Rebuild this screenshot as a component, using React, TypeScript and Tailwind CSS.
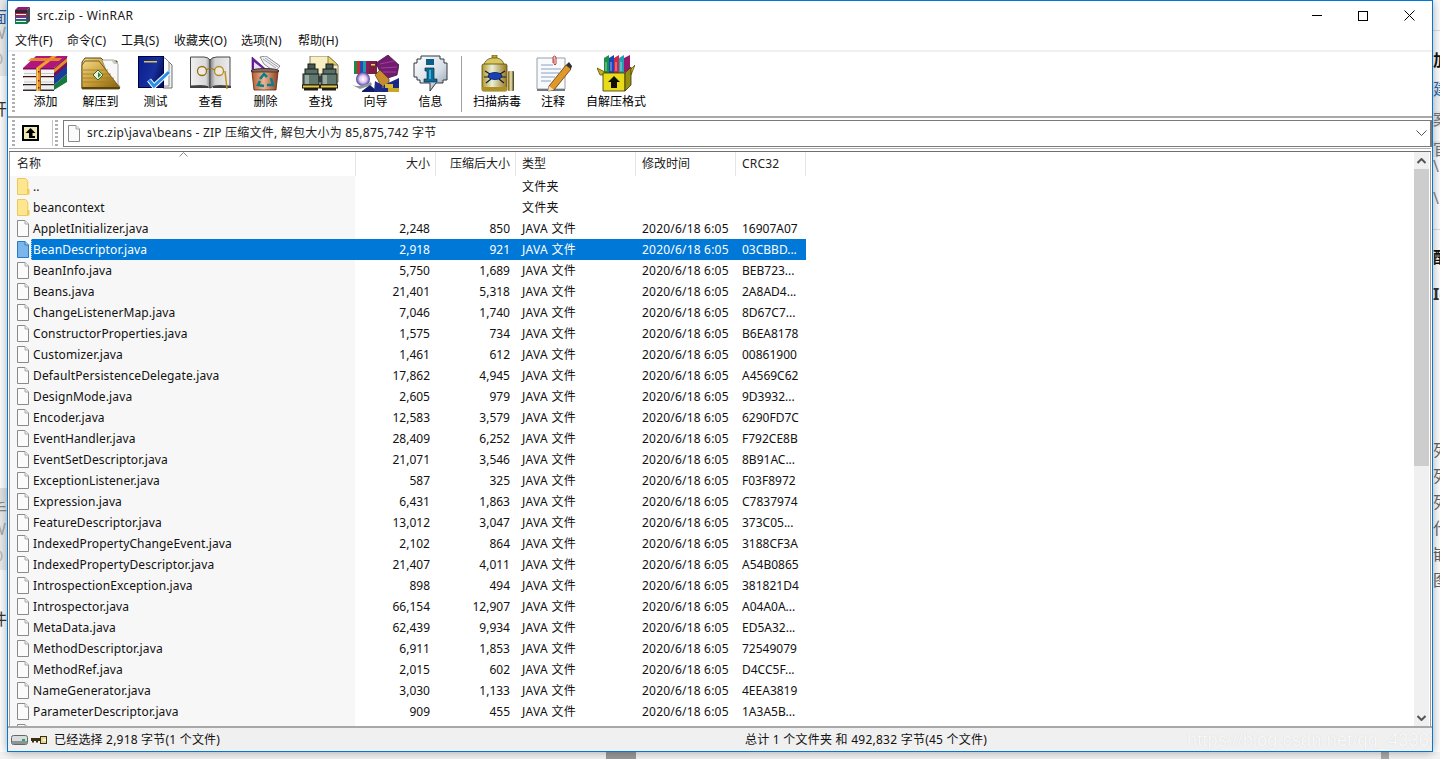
import React from "react";

const rows: [string, string, string, string, string, string][] = [
  ["..", "", "", "文件夹", "", ""],
  ["beancontext", "", "", "文件夹", "", ""],
  ["AppletInitializer.java", "2,248", "850", "JAVA 文件", "2020/6/18 6:05", "16907A07"],
  ["BeanDescriptor.java", "2,918", "921", "JAVA 文件", "2020/6/18 6:05", "03CBBD..."],
  ["BeanInfo.java", "5,750", "1,689", "JAVA 文件", "2020/6/18 6:05", "BEB723..."],
  ["Beans.java", "21,401", "5,318", "JAVA 文件", "2020/6/18 6:05", "2A8AD4..."],
  ["ChangeListenerMap.java", "7,046", "1,740", "JAVA 文件", "2020/6/18 6:05", "8D67C7..."],
  ["ConstructorProperties.java", "1,575", "734", "JAVA 文件", "2020/6/18 6:05", "B6EA8178"],
  ["Customizer.java", "1,461", "612", "JAVA 文件", "2020/6/18 6:05", "00861900"],
  ["DefaultPersistenceDelegate.java", "17,862", "4,945", "JAVA 文件", "2020/6/18 6:05", "A4569C62"],
  ["DesignMode.java", "2,605", "979", "JAVA 文件", "2020/6/18 6:05", "9D3932..."],
  ["Encoder.java", "12,583", "3,579", "JAVA 文件", "2020/6/18 6:05", "6290FD7C"],
  ["EventHandler.java", "28,409", "6,252", "JAVA 文件", "2020/6/18 6:05", "F792CE8B"],
  ["EventSetDescriptor.java", "21,071", "3,546", "JAVA 文件", "2020/6/18 6:05", "8B91AC..."],
  ["ExceptionListener.java", "587", "325", "JAVA 文件", "2020/6/18 6:05", "F03F8972"],
  ["Expression.java", "6,431", "1,863", "JAVA 文件", "2020/6/18 6:05", "C7837974"],
  ["FeatureDescriptor.java", "13,012", "3,047", "JAVA 文件", "2020/6/18 6:05", "373C05..."],
  ["IndexedPropertyChangeEvent.java", "2,102", "864", "JAVA 文件", "2020/6/18 6:05", "3188CF3A"],
  ["IndexedPropertyDescriptor.java", "21,407", "4,011", "JAVA 文件", "2020/6/18 6:05", "A54B0865"],
  ["IntrospectionException.java", "898", "494", "JAVA 文件", "2020/6/18 6:05", "381821D4"],
  ["Introspector.java", "66,154", "12,907", "JAVA 文件", "2020/6/18 6:05", "A04A0A..."],
  ["MetaData.java", "62,439", "9,934", "JAVA 文件", "2020/6/18 6:05", "ED5A32..."],
  ["MethodDescriptor.java", "6,911", "1,853", "JAVA 文件", "2020/6/18 6:05", "72549079"],
  ["MethodRef.java", "2,015", "602", "JAVA 文件", "2020/6/18 6:05", "D4CC5F..."],
  ["NameGenerator.java", "3,030", "1,133", "JAVA 文件", "2020/6/18 6:05", "4EEA3819"],
  ["ParameterDescriptor.java", "909", "455", "JAVA 文件", "2020/6/18 6:05", "1A3A5B..."],
  ["PersistenceDelegate.java", "", "", "", "", ""],
];

const IconAdd = () => (
  <svg width="46" height="36" viewBox="0 0 46 36">
    <polygon points="31,21 44,9 44,19 31,30" fill="#1c3c9c" />
    <polygon points="31,30 44,19 44,27 31,35" fill="#157a3c" />
    <polygon points="31,13 44,1 44,10 31,22" fill="#7c0c58" />
    <polygon points="0,13 13,1 45,1 31,13" fill="#b0167c" />
    <rect x="1" y="13" width="30" height="8" fill="#f4f4f4" />
    <rect x="0" y="13" width="31" height="1.5" fill="#80105c" />
    <rect x="1" y="18" width="30" height="1" fill="#c8c8c8" />
    <rect x="0" y="21" width="31" height="1.5" fill="#43120f" />
    <rect x="1" y="22.5" width="30" height="7" fill="#f4f4f4" />
    <rect x="1" y="26.5" width="30" height="1" fill="#c8c8c8" />
    <rect x="0" y="29" width="31" height="1.5" fill="#302020" />
    <rect x="1" y="30.5" width="30" height="4" fill="#eeeeee" />
    <rect x="0" y="34.5" width="31" height="1.5" fill="#303030" />
    <polygon points="13,13 18,13 34,1 29,1" fill="#f0a030" />
    <polygon points="5,6 36,6 39,3 8,3" fill="#e89028" opacity="0.9" />
    <polygon points="31,14 44,3 44,7 31,18" fill="#e09028" />
    <rect x="13" y="13" width="5" height="23" fill="#e8962c" />
    <rect x="14" y="13" width="1" height="23" fill="#f8c870" />
    <rect x="17" y="13" width="1" height="23" fill="#a05c10" />
    <rect x="15" y="16" width="1.5" height="1.5" fill="#603008" />
    <rect x="15" y="25" width="1.5" height="1.5" fill="#603008" />
    <rect x="15" y="32" width="1.5" height="1.5" fill="#603008" />
  </svg>
);

const IconExtract = () => (
  <svg width="40" height="34" viewBox="0 0 40 34">
    <defs>
      <linearGradient id="gold" x1="0" y1="0" x2="1" y2="1">
        <stop offset="0" stopColor="#f0d888" />
        <stop offset="0.5" stopColor="#c89c38" />
        <stop offset="1" stopColor="#806010" />
      </linearGradient>
    </defs>
    <path d="M1 6 L4 2 L20 2 L23 5 L36 5 L36 32 L1 32 Z" fill="url(#gold)" stroke="#5c4410" />
    <polygon points="21,4 33,4 37,8 37,28 39,31 38,32 29,24" fill="#f8f8f8" stroke="#808080" strokeWidth="0.7" />
    <polygon points="30,4 33,8 37,8 33,4" fill="#c8c8c8" />
    <polygon points="18,5 39,32 38,33 1,33 1,9 4,5" fill="url(#gold)" stroke="#5c4410" strokeWidth="0.8" />
    <path d="M2 14 H27 M2 18 H30 M2 22 H33 M2 26 H35" stroke="#a07c20" strokeWidth="0.8" />
    <polygon points="17,14 22,19 17,24 12,19" fill="#e8f0e0" stroke="#386830" />
    <polygon points="17,16 20,19 17,22" fill="#2c8838" />
    <polygon points="1,33 38,33 39,31 1,31" fill="#5c4408" />
  </svg>
);

const IconTest = () => (
  <svg width="35" height="34" viewBox="0 0 35 34">
    <defs>
      <linearGradient id="bk" x1="0" y1="0" x2="1" y2="0.4">
        <stop offset="0" stopColor="#0a1e90" />
        <stop offset="0.7" stopColor="#18309c" />
        <stop offset="1" stopColor="#081468" />
      </linearGradient>
    </defs>
    <polygon points="25,5 30,5 34,9 34,32 25,32" fill="#f0f0f0" stroke="#707070" />
    <polygon points="25,2 27,2 31,6 31,30 25,30" fill="#fcfcfc" stroke="#909090" />
    <rect x="0.5" y="0.5" width="25" height="31" fill="url(#bk)" stroke="#000048" />
    <rect x="6" y="5" width="13" height="1.5" fill="#e0c840" />
    <path d="M11 24 L16 30 L31 16" fill="none" stroke="#fff" strokeWidth="5" />
    <path d="M11 24 L16 30 L31 16" fill="none" stroke="#2890e8" strokeWidth="3" />
  </svg>
);

const IconView = () => (
  <svg width="41" height="34" viewBox="0 0 41 34">
    <defs>
      <linearGradient id="pgL" x1="0" y1="0" x2="1" y2="0">
        <stop offset="0" stopColor="#f0f0f0" />
        <stop offset="0.8" stopColor="#d8d8d8" />
        <stop offset="1" stopColor="#888888" />
      </linearGradient>
      <linearGradient id="pgR" x1="0" y1="0" x2="1" y2="0">
        <stop offset="0" stopColor="#808080" />
        <stop offset="0.25" stopColor="#d4d4d4" />
        <stop offset="1" stopColor="#ececec" />
      </linearGradient>
    </defs>
    <path d="M0.5 30 V1 H14 Q18 1 20 4 V32 Q16 29 10 29.5 Z" fill="url(#pgL)" stroke="#484848" />
    <path d="M40 30 V1 H27 Q22 1 20 4 V32 Q24 29 30 29.5 Z" fill="url(#pgR)" stroke="#484848" />
    <rect x="0" y="30" width="18" height="2" fill="#404040" />
    <rect x="23" y="30" width="18" height="2" fill="#404040" />
    <circle cx="12" cy="15" r="4.5" fill="#f4f0e0" fillOpacity="0.7" stroke="#98701c" strokeWidth="1.3" />
    <circle cx="29" cy="15" r="4.5" fill="#f4f0e0" fillOpacity="0.7" stroke="#b88c24" strokeWidth="1.3" />
    <path d="M16 14 Q20 11 25 14" fill="none" stroke="#98701c" strokeWidth="1.2" />
    <path d="M35 15 L37 33" stroke="#c09020" strokeWidth="1.5" />
  </svg>
);

const IconDelete = () => (
  <svg width="31" height="35" viewBox="0 0 31 35">
    <defs>
      <linearGradient id="bin" x1="0" y1="0" x2="1" y2="0">
        <stop offset="0" stopColor="#b85c30" />
        <stop offset="0.45" stopColor="#e8b898" />
        <stop offset="1" stopColor="#904020" />
      </linearGradient>
    </defs>
    <polygon points="2,1 2,15 18,15" fill="#6c1c9c" stroke="#30105c" strokeWidth="0.6" />
    <polygon points="4,6 4,13 13,13" fill="#e8e0f0" />
    <polygon points="10,1 16,0 30,10 25,16 14,8" fill="#f0f0f4" stroke="#70707c" strokeWidth="0.8" />
    <path d="M13 3 L26 12 M15 2 L28 11" stroke="#9090a0" strokeWidth="0.8" />
    <ellipse cx="15" cy="15" rx="14" ry="2.5" fill="#886860" stroke="#403028" />
    <polygon points="2,16 28,16 26,34 4,34" fill="url(#bin)" stroke="#502810" strokeWidth="0.8" />
    <path d="M10 23 L14 18 L17 21 M21 22 L23 29 L17 29 M14 30 L8 29 L10 25" fill="none" stroke="#107c88" strokeWidth="2.6" />
  </svg>
);

const IconFind = () => (
  <svg width="37" height="35" viewBox="0 0 37 35">
    <polygon points="8,0 26,0 36,9 36,26 8,26" fill="#f8f0c4" stroke="#88805c" />
    <polygon points="26,0 26,9 36,9" fill="#ecd660" stroke="#88805c" />
    <g>
      <rect x="6" y="8" width="7" height="6" fill="#485850" stroke="#181c18" />
      <rect x="3" y="13" width="13" height="6" fill="#587068" stroke="#181c18" />
      <rect x="1" y="18" width="16" height="11" fill="#607870" stroke="#181c18" />
      <rect x="3" y="19" width="4" height="9" fill="#98aca4" />
      <rect x="0.5" y="29" width="17" height="3" fill="#e0c848" stroke="#281c08" />
      <rect x="2" y="32" width="14" height="2.5" fill="#201c10" />
      <rect x="24" y="8" width="7" height="6" fill="#485850" stroke="#181c18" />
      <rect x="21" y="13" width="13" height="6" fill="#587068" stroke="#181c18" />
      <rect x="19" y="18" width="16" height="11" fill="#607870" stroke="#181c18" />
      <rect x="21" y="19" width="4" height="9" fill="#98aca4" />
      <rect x="18.5" y="29" width="17" height="3" fill="#e0c848" stroke="#281c08" />
      <rect x="20" y="32" width="14" height="2.5" fill="#201c10" />
      <rect x="16" y="20" width="4" height="6" fill="#383c38" />
    </g>
  </svg>
);

const IconWizard = () => (
  <svg width="47" height="37" viewBox="0 0 47 37">
    <defs>
      <radialGradient id="orb" cx="0.5" cy="0.5" r="0.5">
        <stop offset="0" stopColor="#ffffff" />
        <stop offset="0.5" stopColor="#e8c8f0" />
        <stop offset="1" stopColor="#4040a0" />
      </radialGradient>
    </defs>
    <rect x="2" y="6" width="3" height="13" fill="#109048" />
    <rect x="5" y="6" width="3" height="13" fill="#d02830" />
    <rect x="8" y="6" width="3" height="13" fill="#2848c0" />
    <rect x="11" y="6" width="3" height="13" fill="#18a0a0" />
    <rect x="14" y="6" width="3" height="13" fill="#901860" />
    <rect x="17" y="6" width="8" height="13" fill="#782040" />
    <rect x="19" y="9" width="4" height="1.5" fill="#e8d070" />
    <circle cx="11" cy="24" r="7" fill="url(#orb)" />
    <path d="M0 30 Q8 33 19 27 L20 30 L8 34 Z" fill="#9098a0" />
    <polygon points="10,36 18,30 26,37 10,37" fill="#101c68" />
    <path d="M24 8 L36 0 L47 10 L45 20 L36 23 L28 17 Z" fill="#701c70" stroke="#301030" strokeWidth="0.7" />
    <path d="M28 9 L42 6 M29 13 L45 12 M31 17 L44 17" stroke="#a83c98" strokeWidth="1" />
    <path d="M23 20 L28 15 L37 24 L37 31 L29 32 L26 25 Z" fill="#c88c30" stroke="#583808" strokeWidth="0.7" />
    <polygon points="23,26 30,30 32,37 22,37 " fill="#1c2c88" />
    <polygon points="32,30 47,23 47,37 30,37" fill="#182884" />
    <rect x="33" y="29" width="8" height="4" fill="#d8b830" />
    <rect x="36" y="33" width="11" height="4" fill="#c8a828" />
  </svg>
);

const IconInfo = () => (
  <svg width="35" height="37" viewBox="0 0 35 37">
    <defs>
      <linearGradient id="bub" x1="0" y1="0" x2="1" y2="1">
        <stop offset="0" stopColor="#ffffff" />
        <stop offset="0.6" stopColor="#d4dce4" />
        <stop offset="1" stopColor="#8898a8" />
      </linearGradient>
    </defs>
    <path d="M8 1 H27 V4 H31 V8 H34 V25 H30 V28 H23 L17 36 V28 H7 V25 H4 V22 H1 V8 H4 V4 H8 Z" fill="url(#bub)" stroke="#303840" />
    <rect x="13" y="4" width="8" height="6" fill="#0c5c88" />
    <path d="M12 13 H21 V24 H24 V27 H11 V24 H14 V16 H12 Z" fill="#0c6c98" stroke="#082c48" strokeWidth="0.7" />
    <rect x="16" y="15" width="2" height="9" fill="#38b0d8" />
  </svg>
);

const IconScan = () => (
  <svg width="33" height="37" viewBox="0 0 33 37">
    <defs>
      <linearGradient id="can" x1="0" y1="0" x2="1" y2="0">
        <stop offset="0" stopColor="#b09828" />
        <stop offset="0.4" stopColor="#e8f0d8" />
        <stop offset="1" stopColor="#987818" />
      </linearGradient>
      <linearGradient id="lid" x1="0" y1="0" x2="1" y2="0">
        <stop offset="0" stopColor="#806010" />
        <stop offset="0.5" stopColor="#f0e8b0" />
        <stop offset="1" stopColor="#303010" />
      </linearGradient>
    </defs>
    <rect x="11" y="0" width="5" height="4" fill="#c0a030" stroke="#584810" strokeWidth="0.6" />
    <path d="M3 10 Q4 4 11 3 H16 Q22 4 23 10 Z" fill="#d8c860" stroke="#584810" strokeWidth="0.7" />
    <rect x="1" y="9" width="25" height="27" rx="1.5" fill="url(#can)" stroke="#584810" strokeWidth="0.8" />
    <rect x="1" y="32" width="25" height="4" fill="#b09020" />
    <ellipse cx="14" cy="21" rx="7" ry="3.5" fill="#1840b8" stroke="#081858" strokeWidth="0.8" />
    <path d="M4 16 L9 19 M3 22 H8 M5 28 L10 24 M24 16 L19 19 M25 22 H20 M23 28 L18 24" stroke="#101840" strokeWidth="1.2" />
    <rect x="27" y="16" width="6" height="20" rx="1" fill="url(#lid)" />
  </svg>
);

const IconComment = () => (
  <svg width="37" height="37" viewBox="0 0 37 37">
    <polygon points="2,3 30,3 30,34 2,34" fill="#f8fafc" stroke="#98a0a8" />
    <rect x="2" y="34" width="28" height="2" fill="#707880" />
    <path d="M6 10 H18 M6 14 H26 M6 18 H24 M6 22 H20 M6 26 H16" stroke="#88a0c8" strokeWidth="1" />
    <path d="M18 8 V2 Q20 0 21 2 V9 Q20 11 19 9 V4" fill="none" stroke="#c83830" strokeWidth="1" />
    <polygon points="14,31 31,10 36,14 19,35 13,36" fill="#e09828" stroke="#402808" strokeWidth="0.7" />
    <polygon points="31,10 34,7 37,11 36,14" fill="#303030" />
    <polygon points="13,36 14,31 19,35" fill="#f0e0c0" />
  </svg>
);

const IconSfx = () => (
  <svg width="38" height="37" viewBox="0 0 38 37">
    <polygon points="7,3 12,0 12,18 7,18" fill="#189048" />
    <polygon points="12,3 17,0 17,18 12,18" fill="#1848b8" />
    <polygon points="17,3 22,0 22,18 17,18" fill="#d02848" />
    <polygon points="22,3 27,0 27,18 22,18" fill="#20a0b0" />
    <polygon points="27,3 33,0 33,14 27,18" fill="#981870" />
    <path d="M9 7 V16 M14 7 V16 M19 7 V16 M24 7 V16" stroke="#fff" strokeWidth="0.8" opacity="0.75" />
    <polygon points="0,13 8,17 8,20 3,20" fill="#c8b010" stroke="#484008" strokeWidth="0.7" />
    <polygon points="38,10 30,18 30,20 34,20" fill="#d8c018" stroke="#484008" strokeWidth="0.7" />
    <polygon points="6,18 28,18 28,36 6,36" fill="#e8dc18" stroke="#383008" strokeWidth="0.8" />
    <polygon points="28,18 34,12 34,30 28,36" fill="#989010" stroke="#383008" strokeWidth="0.8" />
    <polygon points="17,21 23,27 20,27 20,33 14,33 14,27 11,27" fill="#101008" />
  </svg>
);

const ToolButton = ({ w, label, children }: { w: string; label: string; children: React.ReactNode }) => (
  <div className={`flex flex-col items-center ${w}`}>
    <div className="flex h-[38px] items-center justify-center">{children}</div>
    <div className="mt-[2px] text-[12px] leading-[16px] whitespace-nowrap">{label}</div>
  </div>
);

const FileIcon = ({ selected }: { selected?: boolean }) => (
  <svg width="14" height="17" viewBox="0 0 14 17" className="shrink-0">
    <path
      d="M1.5 0.5 H9 L12.5 4 V16.5 H1.5 Z"
      fill={selected ? "#7ab6ec" : "#fbfbfb"}
      stroke={selected ? "#2a78c0" : "#8a8a8a"}
    />
    <path d="M9 0.5 V4 H12.5" fill={selected ? "#a8d0f4" : "#ececec"} stroke={selected ? "#2a78c0" : "#a8a8a8"} />
  </svg>
);

const FolderIcon = () => (
  <svg width="14" height="17" viewBox="0 0 14 17" className="shrink-0">
    <path d="M1.5 0.5 H9.5 L11.5 2.5 V16.5 H1.5 Z" fill="#fde68f" stroke="#edc95a" />
    <rect x="11.5" y="11" width="2" height="5.5" fill="#f5c94f" />
    <rect x="11.5" y="3" width="1" height="8" fill="#f9dc80" />
  </svg>
);

const Cell = ({ w, right, extra, children }: { w: string; right?: boolean; extra?: string; children: React.ReactNode }) => (
  <div className={`${w} shrink-0 overflow-hidden whitespace-nowrap ${right ? "pr-[5px] text-right" : "pl-[7px]"} ${extra ?? ""}`}>{children}</div>
);

const Strip = ({ items, align }: { items: [number, string, string][]; align: string }) => (
  <div className={`w-[7px] shrink-0 overflow-hidden flex flex-col bg-white ${align}`}>
    {items.map(([h, t, c], i) => (
      <div key={i} style={{ height: h }} className={`w-[7px] flex items-center overflow-hidden ${c}`}>
        {t ? <span className="shrink-0 w-[16px] text-[16px] leading-[16px]">{t}</span> : null}
      </div>
    ))}
  </div>
);

const Grip = ({ h }: { h: string }) => (
  <div className={`w-[3px] ${h} bg-[repeating-linear-gradient(to_bottom,#b0b0b0_0,#b0b0b0_2px,transparent_2px,transparent_4px)]`} />
);

export default function App() {
  return (
    <div className="w-[1440px] h-[759px] overflow-hidden flex flex-col bg-white text-black font-['Noto_Sans','Noto_Sans_CJK_SC',sans-serif] text-[12px]">
      <div className="flex h-[752px]">
        <Strip
          align="items-end"
          items={[
            [10, "", "bg-[#ececec]"],
            [14, "面", "justify-end text-[#2a5a9a] bg-[#ececec]"],
            [18, "W", "justify-end text-[#aaa] bg-[#ececec]"],
            [34, "O", "justify-end text-[#bbb] bg-[#ececec]"],
            [24, "", ""],
            [18, "开", "justify-end text-[#333]"],
            [132, "", ""],
            [238, "", ""],
            [14, "", "bg-[#e4e4e4]"],
            [14, "手", "justify-end text-[#888] bg-[#ececec]"],
            [26, "W", "justify-end text-[#aaa] bg-[#ececec]"],
            [28, "O", "justify-end text-[#bbb] bg-[#ececec]"],
            [40, "", ""],
            [18, "件", "justify-end text-[#333]"],
          ]}
        />
        <div className="relative z-10 w-[1426px] shrink-0 flex flex-col border border-[#0078d7] bg-white shadow-[0_0_10px_rgba(0,0,0,0.35)]">
          {/* title bar */}
          <div className="h-[29px] flex items-center pl-[7px]">
            <svg width="16" height="17" viewBox="0 0 16 17" className="mr-[6px]">
              <polygon points="0,3 3,0 15,0 12,3" fill="#8c2070" />
              <rect x="0" y="3" width="12" height="3" fill="#302838" />
              <rect x="0" y="6" width="12" height="4" fill="#b02038" />
              <rect x="0" y="10" width="12" height="3" fill="#2850b8" />
              <rect x="0" y="13" width="12" height="4" fill="#108048" />
              <rect x="1" y="7" width="10" height="1" fill="#f4f4f4" />
              <rect x="1" y="11" width="10" height="1" fill="#f4f4f4" />
              <rect x="1" y="14" width="10" height="1" fill="#f4f4f4" />
              <polygon points="12,3 15,0 15,14 12,17" fill="#404858" />
            </svg>
            <span className="text-[12px] text-[#1a1a1a] tracking-[0.4px]">src.zip - WinRAR</span>
            <div className="ml-auto flex items-center h-full">
              <div className="w-[46px] flex justify-center">
                <div className="w-[10px] h-px bg-black" />
              </div>
              <div className="w-[46px] flex justify-center">
                <div className="w-[10px] h-[10px] border border-black" />
              </div>
              <div className="w-[46px] flex justify-center">
                <svg width="11" height="11" viewBox="0 0 11 11">
                  <path d="M0.5 0.5 L10.5 10.5 M10.5 0.5 L0.5 10.5" stroke="#000" strokeWidth="1" />
                </svg>
              </div>
            </div>
          </div>
          {/* menu */}
          <div className="h-[20px] flex items-center text-[12px] text-[#111] pl-[7px] pt-[2px] tracking-[0.05px]">
            <span className="w-[52px]">文件(F)</span>
            <span className="w-[54px]">命令(C)</span>
            <span className="w-[53px]">工具(S)</span>
            <span className="w-[67px]">收藏夹(O)</span>
            <span className="w-[57px]">选项(N)</span>
            <span>帮助(H)</span>
          </div>
          {/* toolbar */}
          <div className="h-[66px] border-t-2 border-[#f0f0f0] flex items-center pl-[4px]">
            <Grip h="h-[60px]" />
            <div className="flex items-start pt-[2px] ml-[3px] h-full">
              <ToolButton w="w-[55px]" label="添加"><IconAdd /></ToolButton>
              <ToolButton w="w-[55px]" label="解压到"><IconExtract /></ToolButton>
              <ToolButton w="w-[55px]" label="测试"><IconTest /></ToolButton>
              <ToolButton w="w-[55px]" label="查看"><IconView /></ToolButton>
              <ToolButton w="w-[55px]" label="删除"><IconDelete /></ToolButton>
              <ToolButton w="w-[55px]" label="查找"><IconFind /></ToolButton>
              <ToolButton w="w-[55px]" label="向导"><IconWizard /></ToolButton>
              <ToolButton w="w-[55px]" label="信息"><IconInfo /></ToolButton>
            </div>
            <div className="w-px h-[56px] bg-[#a0a0a0] ml-[3px] mr-[3px]" />
            <div className="flex items-start pt-[2px] h-full">
              <ToolButton w="w-[64px]" label="扫描病毒"><IconScan /></ToolButton>
              <ToolButton w="w-[48px]" label="注释"><IconComment /></ToolButton>
              <ToolButton w="w-[78px]" label="自解压格式"><IconSfx /></ToolButton>
            </div>
          </div>
          {/* address */}
          <div className="h-[31px] border-t-2 border-[#a8a8a8] flex items-center pl-[4px]">
            <Grip h="h-[26px]" />
            <div className="ml-[7px] w-[17px] h-[16px] border-2 border-black bg-[#efe9b4] flex items-center justify-center">
              <svg width="11" height="10" viewBox="0 0 11 10">
                <path d="M5.5 0 L10.5 5 H7.5 V8 H10 V10 H4 V5 H0.5 Z" fill="#000" />
              </svg>
            </div>
            <div className="ml-[13px]"><div className="w-px h-[26px] bg-[#c8c8c8]" /></div>
            <div className="ml-[2px]"><Grip h="h-[26px]" /></div>
            <div className="ml-[5px] mt-[1px] flex-1 h-[27px] border border-[#7a7a7a] border-r-2 flex items-center">
              <div className="ml-[3px]"><FileIcon /></div>
              <span className="ml-[6px] text-[12px] text-[#222] tracking-[0.22px]">src.zip\java\beans - ZIP 压缩文件, 解包大小为 85,875,742 字节</span>
              <svg width="11" height="7" viewBox="0 0 11 7" className="ml-auto mr-[3px]">
                <path d="M0.5 0.5 L5.5 5.5 L10.5 0.5" fill="none" stroke="#555" />
              </svg>
            </div>
          </div>
          {/* list */}
          <div className="h-[4px] border-b border-[#707070] mx-[1px] mt-[1px] border-t border-t-[#b0b0b0]" />
          <div className="flex-1 min-h-0 flex ml-[1px] mr-[1px] border-l border-r border-[#a0a0a0]">
            <div className="flex-1 min-w-0 flex flex-col overflow-hidden">
              {/* header */}
              <div className="h-[24px] shrink-0 flex flex-col text-[#222]">
                <div className="h-[24px] flex items-center relative">
                  <div className="w-[346px] pl-[7px] h-full flex items-center border-r border-[#e5e5e5] relative">
                    名称
                    <svg width="9" height="5" viewBox="0 0 9 5" className="absolute left-[169px] top-0">
                      <path d="M0.5 4.5 L4.5 0.5 L8.5 4.5" fill="none" stroke="#888" />
                    </svg>
                  </div>
                  <div className="w-[80px] pr-[5px] h-full flex items-center justify-end border-r border-[#e5e5e5]">大小</div>
                  <div className="w-[80px] pr-[5px] h-full flex items-center justify-end border-r border-[#e5e5e5]">压缩后大小</div>
                  <div className="w-[120px] pl-[6px] h-full flex items-center border-r border-[#e5e5e5]">类型</div>
                  <div className="w-[100px] pl-[6px] h-full flex items-center border-r border-[#e5e5e5]">修改时间</div>
                  <div className="w-[70px] pl-[6px] h-full flex items-center border-r border-[#e5e5e5] tracking-[0.2px]">CRC32</div>
                </div>
              </div>
              {/* rows */}
              <div className="flex-1 min-h-0 overflow-hidden">
                {rows.map((r, i) => {
                  const sel = r[0] === "BeanDescriptor.java";
                  const dir = i < 2;
                  return (
                    <div key={r[0]} className="h-[21px] flex items-center leading-[21px]">
                      <div className="w-[345px] h-full shrink-0 bg-[#f7f7f7] flex items-center pl-[6px]">
                        {dir ? <FolderIcon /> : <FileIcon selected={sel} />}
                        <div className={`ml-[1px] h-[21px] flex-1 tracking-[0.13px] ${sel ? "pl-[1px] bg-[#0078d7] text-white border-l border-dotted border-[#9cc8ee]" : "pl-[2px] text-[#111]"}`}>{r[0]}</div>
                      </div>
                      <div className={`flex h-full items-center ${sel ? "bg-[#0078d7] text-white" : "text-[#111]"}`}>
                        <Cell w="w-[80px]" right>{r[1]}</Cell>
                        <Cell w="w-[80px]" right>{r[2]}</Cell>
                        <Cell w="w-[120px]" extra="tracking-[0.3px]">{r[3]}</Cell>
                        <Cell w="w-[100px]" extra="tracking-[0.2px]">{r[4]}</Cell>
                        <Cell w="w-[71px]">{r[5]}</Cell>
                      </div>
                    </div>
                  );
                })}
              </div>
            </div>
            {/* scrollbar */}
            <div className="w-[15px] shrink-0 bg-[#f0f0f0] flex flex-col">
              <div className="h-[17px] flex items-center justify-center">
                <svg width="9" height="6" viewBox="0 0 9 6">
                  <path d="M0.5 5 L4.5 1 L8.5 5" fill="none" stroke="#555" strokeWidth="2" />
                </svg>
              </div>
              <div className="h-[297px] bg-[#cdcdcd]" />
              <div className="flex-1" />
              <div className="h-[17px] flex items-center justify-center">
                <svg width="9" height="6" viewBox="0 0 9 6">
                  <path d="M0.5 1 L4.5 5 L8.5 1" fill="none" stroke="#555" strokeWidth="2" />
                </svg>
              </div>
            </div>
            <div className="w-[1px] shrink-0" />
          </div>
          {/* status bar */}
          <div className="h-[25px] shrink-0 border-t-2 border-[#a8a8a8] bg-[#f0f0f0] flex items-center text-[#111] overflow-hidden">
            <div className="ml-[3px] w-[38px] flex items-center shrink-0">
              <svg width="17" height="10" viewBox="0 0 17 10">
                <rect x="0.5" y="0.5" width="16" height="9" rx="2" fill="#d8dcdc" stroke="#606868" />
                <rect x="1" y="6" width="15" height="3" fill="#8c9494" />
                <rect x="11" y="4" width="3" height="2" fill="#20a868" />
              </svg>
              <svg width="16" height="8" viewBox="0 0 16 8" className="ml-[3px]">
                <rect x="0" y="2" width="9" height="3" fill="#383010" />
                <rect x="1" y="5" width="2" height="1.5" fill="#383010" />
                <rect x="5" y="5" width="2" height="1.5" fill="#383010" />
                <rect x="9.5" y="0.5" width="6" height="7" fill="#e8d890" stroke="#383010" />
                <rect x="12" y="3" width="3" height="2" fill="#f0f0f0" />
              </svg>
            </div>
            <div className="w-px h-[19px] bg-[#d0d0d0] ml-[1px]" />
            <div className="w-[690px] pl-[4px] pt-[1px] shrink-0 tracking-[0.2px]">已经选择 2,918 字节(1 个文件)</div>
            <div className="w-px h-[19px] bg-[#d0d0d0]" />
            <div className="pl-[5px] pt-[1px] w-[447px] shrink-0 tracking-[0.24px]">总计 1 个文件夹 和 492,832 字节(45 个文件)</div>
            <div className="font-['Liberation_Sans',sans-serif] text-[18px] leading-[24px] tracking-[0.2px] whitespace-nowrap text-[#f8f8f8] [text-shadow:0_0_1px_#d0d0d0]">https://blog.csdn.net/qq_43363066</div>
          </div>
        </div>
        <Strip
          align="items-start"
          items={[
            [30, "", ""],
            [1, "", "bg-[#ddd]"],
            [20, "", ""],
            [18, "加", "text-[#111] font-bold"],
            [12, "", ""],
            [16, "建", "text-[#2a6aaa] bg-[#eef0f4]"],
            [14, "", "bg-[#f4f5f8]"],
            [16, "案", "text-[#777] bg-[#eef0f4]"],
            [14, "", ""],
            [16, "官", "text-[#777] bg-[#eef0f4]"],
            [18, "\\", "text-[#888]"],
            [14, "", ""],
            [18, "\\", "text-[#888]"],
            [22, "", ""],
            [1, "", "bg-[#ddd]"],
            [18, "", ""],
            [18, "配", "text-[#111] font-bold"],
            [19, "", ""],
            [18, "Id", "text-[#333] font-bold"],
            [138, "", ""],
            [18, "列", "text-[#666]"],
            [8, "", ""],
            [18, "列", "text-[#666]"],
            [8, "", ""],
            [18, "列", "text-[#666]"],
            [8, "", ""],
            [18, "代", "text-[#666]"],
            [8, "", ""],
            [18, "嵌", "text-[#666]"],
            [8, "", ""],
            [18, "图", "text-[#666]"],
          ]}
        />
      </div>
      <div className="h-[7px] flex bg-[#f4f4f4]">
        <div className="w-[606px]" />
        <div className="w-[30px] bg-[#999]" />
        <div className="w-[745px]" />
        <div className="w-[8px] bg-[#aaa]" />
      </div>
    </div>
  );
}
